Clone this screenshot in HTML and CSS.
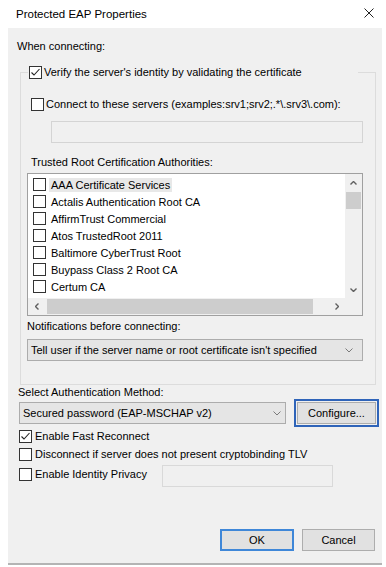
FILE: index.html
```html
<!DOCTYPE html>
<html lang="en">

<head>
    <meta charset="UTF-8">
    <meta name="viewport" content="width=device-width, initial-scale=1.0">
    <title>Protected EAP Properties</title>
    <link rel="stylesheet" href="styles.css">
</head>

<body>

    <div class="titlebar">
        <span class="title">Protected EAP Properties</span>
        <svg class="close" width="10" height="10" viewBox="0 0 10 10">
            <path d="M0.5 0.5L9.5 9.5M9.5 0.5L0.5 9.5" stroke="#222" stroke-width="1" fill="none" />
        </svg>
    </div>

    <div class="dialog">
        <div class="heading">When connecting:</div>

        <fieldset class="group">
            <legend class="group-title">
                <span class="check"><svg width="11" height="11" viewBox="0 0 11 11"><polyline points="1.5,5.5 4,8 9.5,2" /></svg></span>
                <span>Verify the server's identity by validating the certificate</span>
            </legend>

            <div class="cbrow servers">
                <span class="check"></span>
                <span>Connect to these servers (examples:srv1;srv2;.*\.srv3\.com):</span>
            </div>
            <input class="field servers-field" type="text" disabled>

            <div class="label indent">Trusted Root Certification Authorities:</div>
            <div class="list">
                <div class="items">
                    <div class="item"><span class="check"></span><span class="item-text focused">AAA Certificate Services</span></div>
                    <div class="item"><span class="check"></span><span class="item-text">Actalis Authentication Root CA</span></div>
                    <div class="item"><span class="check"></span><span class="item-text">AffirmTrust Commercial</span></div>
                    <div class="item"><span class="check"></span><span class="item-text">Atos TrustedRoot 2011</span></div>
                    <div class="item"><span class="check"></span><span class="item-text">Baltimore CyberTrust Root</span></div>
                    <div class="item"><span class="check"></span><span class="item-text">Buypass Class 2 Root CA</span></div>
                    <div class="item"><span class="check"></span><span class="item-text">Certum CA</span></div>
                </div>
                <div class="vscroll">
                    <div class="sb-btn"><svg width="7" height="4" viewBox="0 0 7 4"><polyline points="0.5,3.5 3.5,0.5 6.5,3.5" /></svg></div>
                    <div class="vthumb"></div>
                    <div class="sb-btn down"><svg width="7" height="4" viewBox="0 0 7 4"><polyline points="0.5,0.5 3.5,3.5 6.5,0.5" /></svg></div>
                </div>
                <div class="hscroll">
                    <div class="sb-btn"><svg width="4" height="7" viewBox="0 0 4 7"><polyline points="3.5,0.5 0.5,3.5 3.5,6.5" /></svg></div>
                    <div class="hthumb"></div>
                    <div class="sb-btn"><svg width="4" height="7" viewBox="0 0 4 7"><polyline points="0.5,0.5 3.5,3.5 0.5,6.5" /></svg></div>
                </div>
                <div class="corner"></div>
            </div>

            <div class="label notify-label">Notifications before connecting:</div>
            <div class="combo notify">
                <span>Tell user if the server name or root certificate isn't specified</span>
                <svg width="8" height="5" viewBox="0 0 8 5"><polyline points="0.5,0.5 4,4 7.5,0.5" /></svg>
            </div>
        </fieldset>

        <div class="label method-label">Select Authentication Method:</div>
        <div class="authrow">
            <div class="combo auth">
                <span>Secured password (EAP-MSCHAP v2)</span>
                <svg width="8" height="5" viewBox="0 0 8 5"><polyline points="0.5,0.5 4,4 7.5,0.5" /></svg>
            </div>
            <button class="btn configure">Configure...</button>
        </div>

        <div class="options">
            <div class="cbrow fast">
                <span class="check"><svg width="11" height="11" viewBox="0 0 11 11"><polyline points="1.5,5.5 4,8 9.5,2" /></svg></span>
                <span>Enable Fast Reconnect</span>
            </div>
            <div class="cbrow">
                <span class="check"></span>
                <span>Disconnect if server does not present cryptobinding TLV</span>
            </div>
            <div class="privacy">
                <div class="cbrow">
                    <span class="check"></span>
                    <span>Enable Identity Privacy</span>
                </div>
                <input class="field privacy-field" type="text" disabled>
            </div>
        </div>

        <div class="buttons">
            <button class="btn ok">OK</button>
            <button class="btn cancel">Cancel</button>
        </div>
    </div>

</body>

</html>
```

FILE: styles.css
```css
body {
    margin: 0;
    background-color: #fff;
    font-family: "Segoe UI", "Liberation Sans", Arial, sans-serif;
    font-size: 11px;
    color: #000;
}

.titlebar {
    height: 28px;
    display: flex;
    align-items: center;
    justify-content: space-between;
    padding: 0 12px 0 16px;
}

.title {
    font-size: 11.5px;
    line-height: 14px;
}

.close {
    margin-bottom: 3px;
}

.dialog {
    margin-left: 8px;
    width: 374px;
    height: 537px;
    box-sizing: border-box;
    padding: 12px 0 12px 0;
    background-color: #f0f0f0;
    border-bottom: 2px solid #b4b4b4;
    display: flex;
    flex-direction: column;
}

.heading {
    margin-left: 9px;
    line-height: 13px;
}

.label {
    line-height: 13px;
}

/* group box with the checkbox as its title */
.group {
    margin: 12px 6px 0 12px;
    padding: 0 12px 23px 6px;
    border: 1px solid #dcdcdc;
    min-width: 0;
}

.group-title {
    width: 329px;
    margin-left: 1px;
    padding: 0 0 0 1px;
    display: flex;
    align-items: center;
    gap: 2px;
    line-height: 14px;
}

.cbrow {
    display: flex;
    align-items: center;
    gap: 3px;
    height: 14px;
    line-height: 14px;
    white-space: nowrap;
}

.check {
    width: 13px;
    height: 13px;
    box-sizing: border-box;
    border: 1px solid #333;
    background-color: #fff;
    flex-shrink: 0;
    display: flex;
}

.check polyline {
    fill: none;
    stroke: #222;
    stroke-width: 1.1;
}

.servers {
    margin: 18px 0 0 4px;
    gap: 2px;
}

.field {
    display: block;
    height: 22px;
    box-sizing: border-box;
    border: 1px solid #d4d4d4;
    background-color: #f0f0f0;
    margin: 0;
    padding: 0;
}

.servers-field {
    margin: 10px 0 0 24px;
    width: 312px;
}

.indent {
    margin: 13px 0 0 4px;
}

/* certificate list */
.list {
    margin-top: 4px;
    height: 143px;
    box-sizing: border-box;
    border: 1px solid #a0a0a0;
    background-color: #fff;
    display: grid;
    grid-template-columns: 1fr 17px;
    grid-template-rows: 1fr 17px;
}

.items {
    padding-top: 2px;
    overflow: hidden;
}

.item {
    display: flex;
    align-items: center;
    height: 17px;
    padding-left: 5px;
    white-space: nowrap;
}

.item-text {
    margin-left: 3px;
    padding: 0 2px;
    line-height: 14px;
}

.item-text.focused {
    background-color: #e8e8e8;
}

.vscroll,
.hscroll,
.corner {
    background-color: #f0f0f0;
}

.vscroll {
    display: flex;
    flex-direction: column;
}

.hscroll {
    display: flex;
}

.sb-btn {
    width: 17px;
    height: 17px;
    flex-shrink: 0;
    display: flex;
    align-items: center;
    justify-content: center;
}

.sb-btn polyline {
    fill: none;
    stroke: #606060;
    stroke-width: 1.4;
}

.sb-btn.down {
    margin-top: auto;
}

.vthumb {
    margin: 1px 1px 0;
    height: 17px;
    background-color: #cdcdcd;
}

.hthumb {
    flex: 1;
    margin: 1px 15px 1px 2px;
    background-color: #cdcdcd;
}

.notify-label {
    margin-top: 4px;
}

/* drop down boxes */
.combo {
    height: 22px;
    box-sizing: border-box;
    border: 1px solid #acacac;
    background-color: #e5e5e5;
    display: flex;
    align-items: center;
    justify-content: space-between;
    padding: 0 9px 0 3px;
    white-space: nowrap;
}

.combo polyline {
    fill: none;
    stroke: #7a7a7a;
    stroke-width: 1;
}

.notify {
    margin-top: 6px;
}

.method-label {
    margin: 1px 0 0 10px;
}

.authrow {
    display: flex;
    align-items: center;
    margin: 3px 0 0 11px;
}

.combo.auth {
    width: 267px;
    padding-right: 4px;
}

.btn {
    height: 22px;
    box-sizing: border-box;
    border: 1px solid #adadad;
    background-color: #e1e1e1;
    font-family: inherit;
    font-size: 11px;
    color: #000;
    padding: 0;
}

.configure {
    margin-left: 11px;
    width: 79px;
    outline: 2px solid #2f64b9;
    outline-offset: 1px;
}

.options {
    margin-left: 11px;
}

.options .cbrow {
    margin-top: 4px;
}

.options .fast {
    margin-top: 5px;
}

.privacy {
    display: flex;
    align-items: flex-start;
    margin-top: 4px;
}

.privacy .cbrow {
    width: 143px;
    margin-top: 2px;
}

.privacy-field {
    width: 171px;
    border-color: #d9d9d9;
}

.buttons {
    margin: auto 7px 0 0;
    display: flex;
    justify-content: flex-end;
    gap: 8px;
}

.ok {
    width: 74px;
    border: 2px solid #3f87d8;
}

.cancel {
    width: 73px;
}
```
